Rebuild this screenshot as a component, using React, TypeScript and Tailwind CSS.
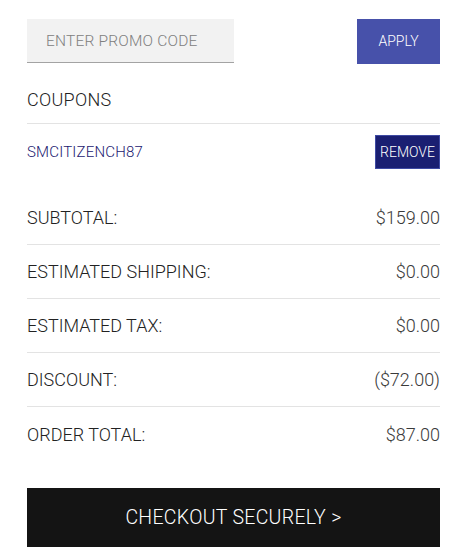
export default function App() {
  const rows = [
    { label: "SUBTOTAL:", value: "$159.00" },
    { label: "ESTIMATED SHIPPING:", value: "$0.00" },
    { label: "ESTIMATED TAX:", value: "$0.00" },
    { label: "DISCOUNT:", value: "($72.00)" },
    { label: "ORDER TOTAL:", value: "$87.00" },
  ];

  return (
    <div className="min-h-screen bg-white font-['Roboto',sans-serif] font-light text-[#222]">
      <div className="ml-[27px] w-[413px] pt-[19px]">
        <div className="flex items-start justify-between">
          <input
            placeholder="ENTER PROMO CODE"
            className="h-[44px] w-[207px] border-b-[1.5px] border-[#a3a3a3] bg-[#f2f2f2] px-[19px] text-[15.5px] tracking-[0.2px] uppercase placeholder:text-[#808080] outline-none"
          />
          <button className="h-[45px] w-[83px] bg-[#4751aa] text-[14px] text-white">
            APPLY
          </button>
        </div>

        <div className="mt-[26px] border-b border-[#e3e3e3] pb-[13px] text-[18px] leading-[20px] tracking-[0.3px]">
          COUPONS
        </div>

        <div className="mt-[11px] flex h-[34px] items-center justify-between">
          <span className="text-[15px] tracking-[0.2px] text-[#1b2070]">SMCITIZENCH87</span>
          <button className="h-[34px] w-[65px] border border-[#3e4aa3] bg-[#1a1f72] text-[14px] text-white">
            REMOVE
          </button>
        </div>

        <div className="mt-[22px]">
          {rows.map((r, i) => (
            <div
              key={r.label}
              className={`flex h-[54px] items-center justify-between text-[18px] ${
                i < rows.length - 1 ? "border-b border-[#e3e3e3]" : ""
              }`}
            >
              <span>{r.label}</span>
              <span className="text-[#3a3a3a]">{r.value}</span>
            </div>
          ))}
        </div>

        <button className="mt-[27px] h-[59px] w-full bg-[#141414] text-[19.5px] tracking-[0.3px] text-white">
          CHECKOUT SECURELY &gt;
        </button>
      </div>
    </div>
  );
}
